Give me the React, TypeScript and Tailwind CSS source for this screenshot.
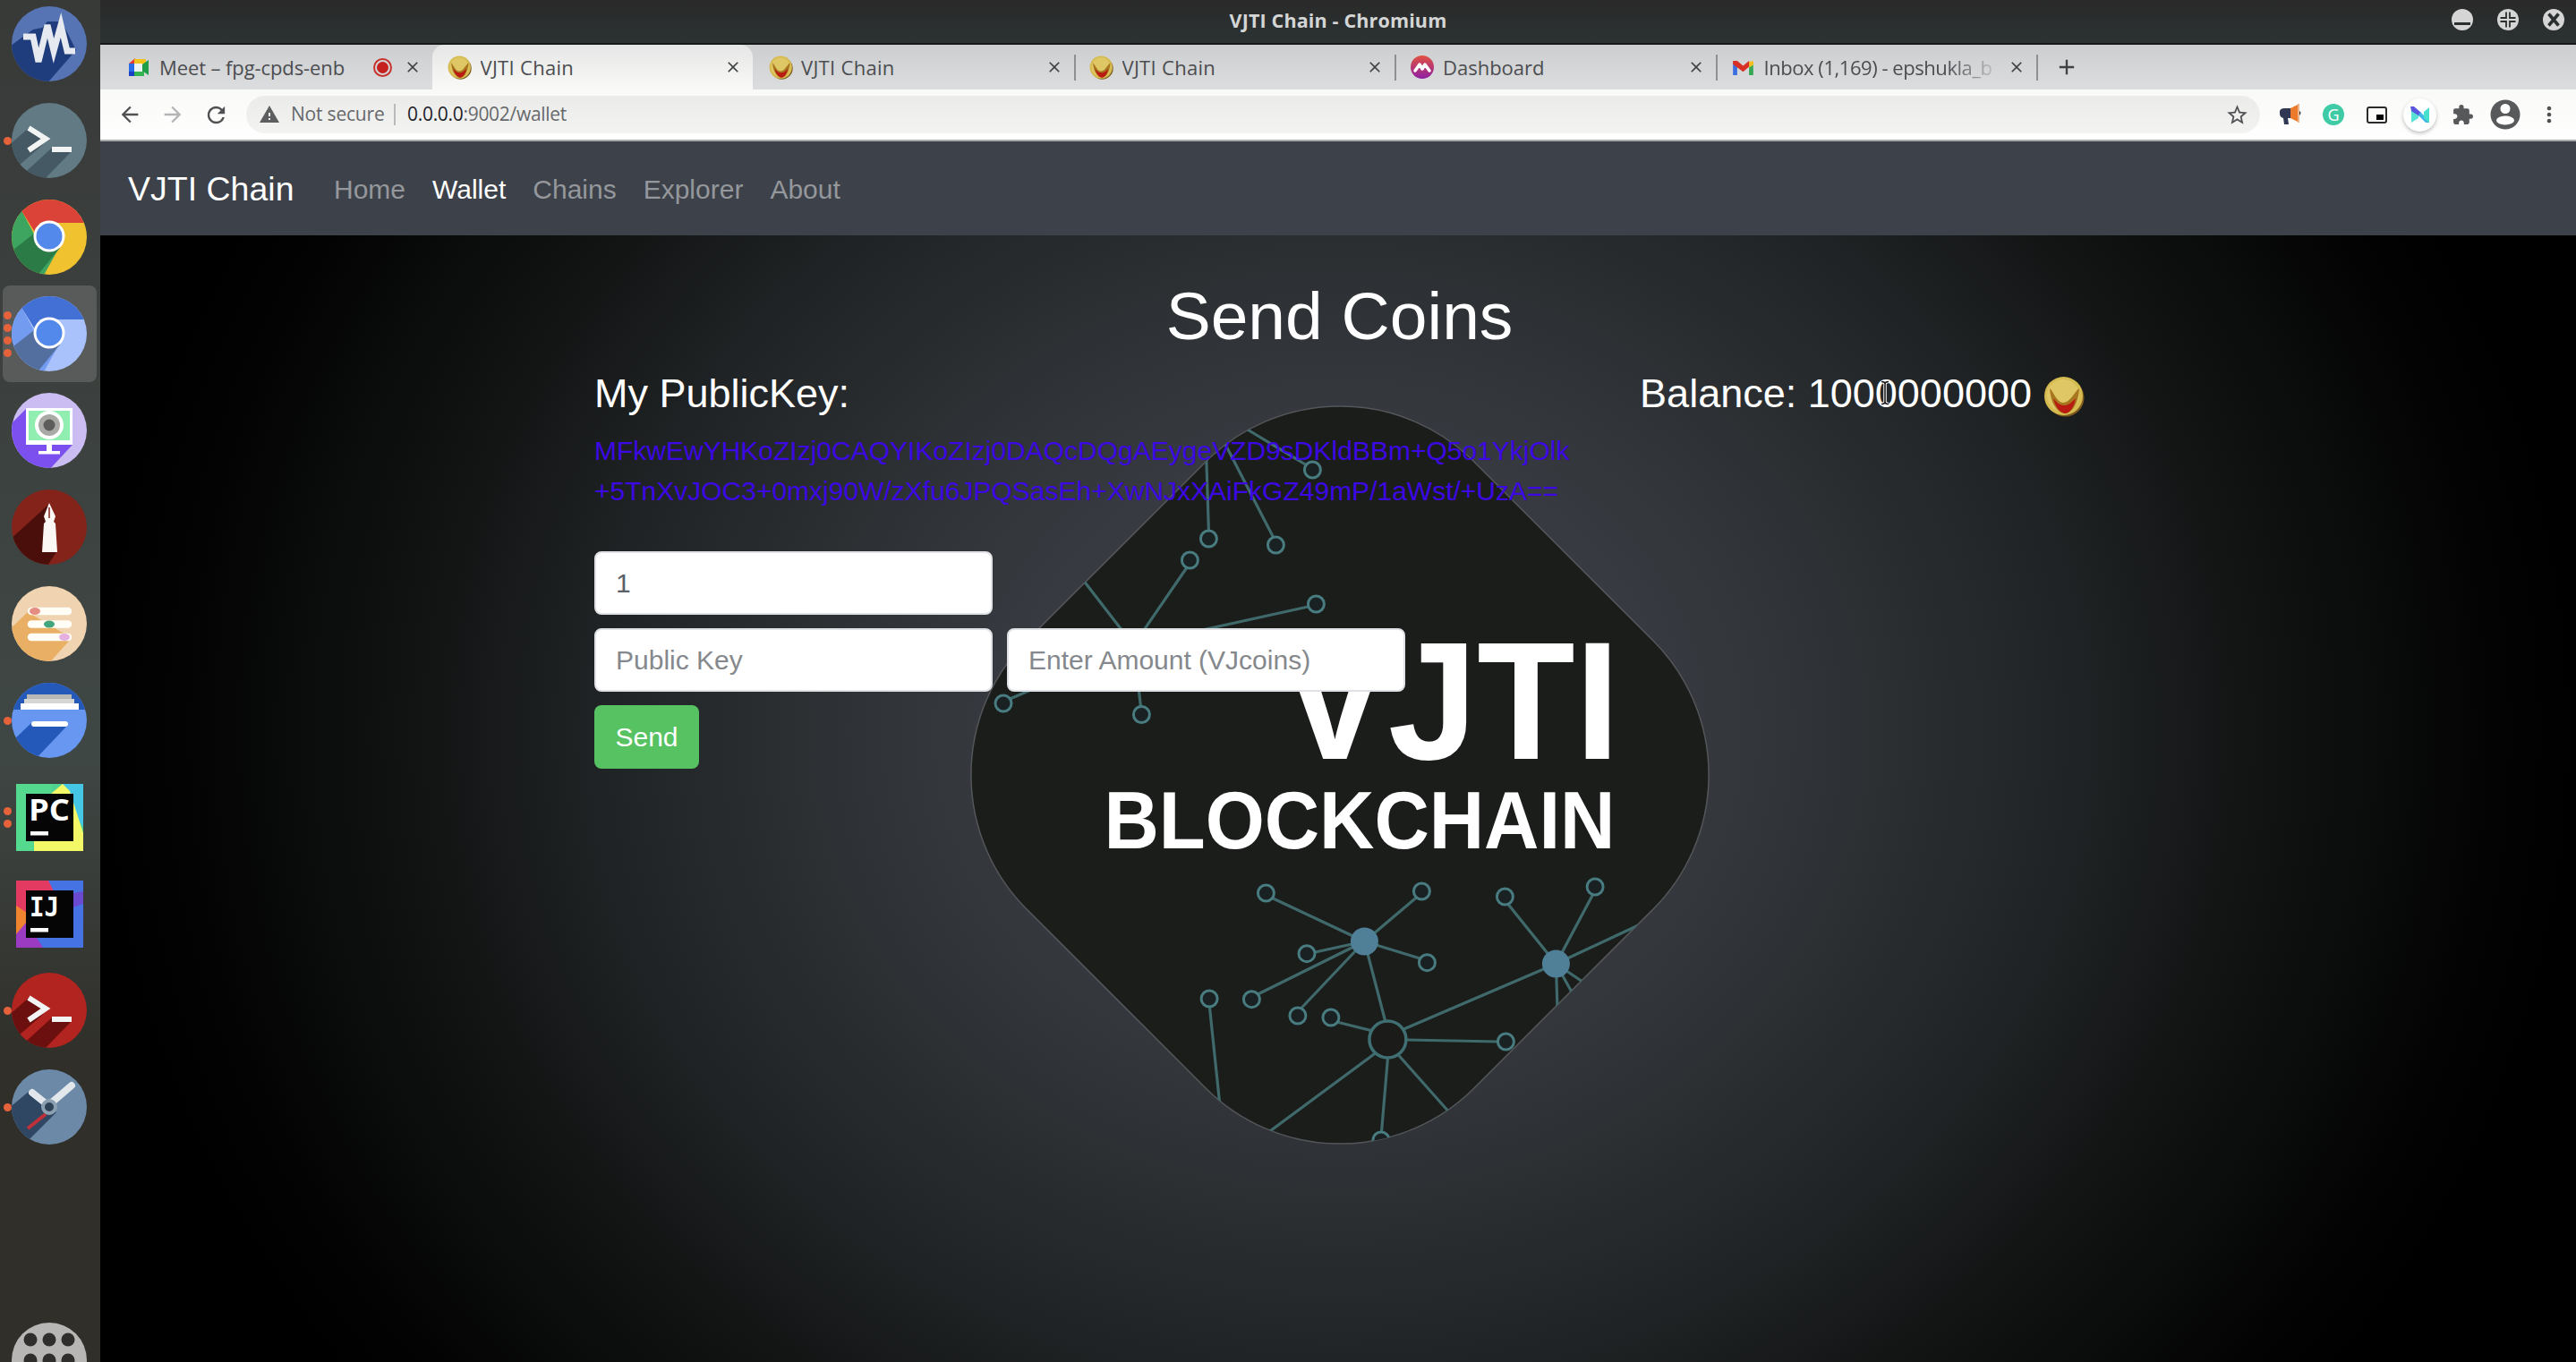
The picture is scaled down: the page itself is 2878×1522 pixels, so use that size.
import React from "react";
import { MdArrowBack, MdArrowForward, MdRefresh, MdWarning, MdStarBorder, MdExtension, MdMoreVert, MdClose, MdAdd } from "react-icons/md";

/* ---------- Launcher ---------- */

function Round({ id, bg, children }: { id: string; bg: string; children: React.ReactNode }) {
  return (
    <svg viewBox="0 0 84 84" className="h-[84px] w-[84px]">
      <clipPath id={id}>
        <circle cx="42" cy="42" r="42" />
      </clipPath>
      <g clipPath={`url(#${id})`}>
        <rect width="84" height="84" fill={bg} />
        {children}
      </g>
    </svg>
  );
}

const VmIcon = () => (
  <Round id="vm" bg="#5673b3">
    <path d="M-4 46 L24 26 L34 24 L40 17 L56 17 L72 49 L38 88 L-4 88Z" fill="#1f3c7c" />
    <path d="M13 34H24L30 62L40 21L47 50L55 21L62 50H71" fill="none" stroke="#e6eaf0" strokeWidth="7" />
  </Round>
);

const TerminalIcon = ({ id, bg, shade, stripe }: { id: string; bg: string; shade: string; stripe: string }) => (
  <Round id={id} bg={bg}>
    <path d="M19 28L-6 50V88H4L38 42Z" fill={shade} />
    <path d="M45 50L8 84L34 88L67 54Z" fill={shade} />
    <path d="M45 50L12 80L8 70L38 44Z" fill={stripe} />
    <path d="M19 28L38 40L19 53" fill="none" stroke="#f2f3f3" strokeWidth="6" />
    <path d="M45 52H67" stroke="#f2f3f3" strokeWidth="6" />
  </Round>
);

const ChromeIcon = ({ id, top, left, leftShade, right }: { id: string; top: string; left: string; leftShade: string; right: string }) => (
  <Round id={id} bg={right}>
    <path d="M0 0L12 14L27 42L54 52L34 88H0Z" fill={left} />
    <path d="M25 38L2 56L10 88H26L54 54Z" fill={leftShade} />
    <path d="M12 14L28 40L42 26H84V0H0Z" fill={top} />
    <circle cx="42" cy="41" r="17.500" fill="#fff" />
    <circle cx="42" cy="41" r="14.500" fill="#5489ec" />
  </Round>
);

const RecorderIcon = () => (
  <Round id="rec" bg="#cbbcf1">
    <path d="M16 18L-4 38V88H40L68 58Z" fill="#7c50ef" />
    <rect x="16" y="17" width="52" height="41" fill="#fff" />
    <rect x="19" y="20" width="46" height="33" fill="#90efb0" />
    <circle cx="42" cy="36" r="16" fill="#fff" />
    <circle cx="42" cy="36" r="12" fill="#a9a9a6" />
    <circle cx="42" cy="36" r="6.500" fill="#5d5e5c" />
    <path d="M39 58H45V65H54V68.500H30V65H39Z" fill="#fff" />
  </Round>
);

const PenIcon = () => (
  <Round id="pen" bg="#84231a">
    <path d="M40 18L-4 58L20 88H38L50 70Z" fill="#4b0f0b" />
    <path d="M42 15L49 30L47 36L49 38L51 70H34L36 38L38 36L36 30Z" fill="#fbf7f4" />
    <path d="M42 20V32" stroke="#84231a" strokeWidth="1.500" />
  </Round>
);

const TweaksIcon = () => (
  <Round id="twk" bg="#f0d3b0">
    <path d="M18 29L-4 50V88H40L67 58Z" fill="#e9b065" />
    <g stroke="#fffdf6" strokeWidth="8.500" strokeLinecap="round">
      <path d="M22 28H63M22 42.500H63M22 57H63" />
    </g>
    <ellipse cx="26" cy="28" rx="6" ry="4" fill="#e58d83" />
    <ellipse cx="42" cy="42.500" rx="6" ry="4" fill="#43a57e" />
    <ellipse cx="59" cy="57" rx="6" ry="4" fill="#e5b0e0" />
  </Round>
);

const FilesIcon = () => (
  <Round id="fil" bg="#6797f0">
    <rect width="84" height="30" fill="#2559b9" />
    <path d="M23 44L0 66V88H24L63 47Z" fill="#2559b9" />
    <rect x="17" y="13" width="50" height="6" fill="#b8b8b6" />
    <rect x="14" y="18" width="56" height="6" fill="#d6d6d4" />
    <rect x="10" y="23" width="65" height="7" fill="#fff" />
    <path d="M25 46H60" stroke="#fff" strokeWidth="6" strokeLinecap="round" />
  </Round>
);

const PyCharmIcon = () => (
  <svg viewBox="0 0 75 75" className="h-[75px] w-[75px]">
    <rect width="75" height="75" fill="#4fd393" />
    <path d="M44 10L52 0H75V48Z" fill="#45c6e4" />
    <path d="M40 10L52 0L60 8L75 55V75H20V62Z" fill="#f3f866" />
    <path d="M0 0H40V20H12V62H20L18 75H0Z" fill="#55d98f" />
    <rect x="11" y="11" width="53" height="53" fill="#050505" />
    <text x="14" y="41" fontSize="34" fontWeight="700" fontFamily="Open Sans, sans-serif" fill="#fff" textLength="46" lengthAdjust="spacingAndGlyphs">PC</text>
    <rect x="16" y="53" width="20" height="4.500" fill="#fff" />
  </svg>
);

const IntelliJIcon = () => (
  <svg viewBox="0 0 75 75" className="h-[75px] w-[75px]">
    <rect width="75" height="75" fill="#4673e4" />
    <path d="M0 0H36L44 16L12 50L0 30Z" fill="#e33a62" />
    <path d="M0 28L12 36V52L0 68Z" fill="#ee8330" />
    <path d="M0 60L12 46L30 75H0Z" fill="#9a3bc2" />
    <path d="M64 14L75 12V26L64 30Z" fill="#6a4bd0" />
    <rect x="11" y="11" width="53" height="53" fill="#050505" />
    <text x="15" y="40" fontSize="31" fontWeight="700" fontFamily="DejaVu Sans Mono, monospace" fill="#fff" textLength="33" lengthAdjust="spacingAndGlyphs">IJ</text>
    <rect x="16" y="53" width="20" height="4.500" fill="#fff" />
  </svg>
);

const ClockIcon = () => (
  <Round id="clk" bg="#6c8aa8">
    <path d="M20 24L-4 44V80L20 78L50 48Z" fill="#2f4763" />
    <path d="M38 50L18 66" stroke="#c03038" strokeWidth="4" />
    <path d="M23 26L38 38M67 18L46 36" stroke="#e2e7ec" strokeWidth="8" strokeLinecap="round" />
    <circle cx="42" cy="42" r="7" fill="#2f4358" stroke="#8ca0b2" strokeWidth="4" />
  </Round>
);

const GridIcon = () => (
  <Round id="grd" bg="#b7b6b5">
    {[21, 42, 63].map((x) =>
      [19, 42, 64].map((y) => <circle key={`${x}-${y}`} cx={x} cy={y} r="7.500" fill="#2f2e2c" />)
    )}
  </Round>
);

const launcher: { icon: React.ReactNode; dots: number; active?: boolean }[] = [
  { icon: <VmIcon />, dots: 0 },
  { icon: <TerminalIcon id="term" bg="#617a83" shade="#445963" stripe="#617a83" />, dots: 1 },
  { icon: <ChromeIcon id="chr" top="#dc4338" left="#3ea561" leftShade="#2b7b46" right="#f0c230" />, dots: 0 },
  { icon: <ChromeIcon id="chm" top="#4370d4" left="#739bf0" leftShade="#526f9f" right="#a9c2fb" />, dots: 4, active: true },
  { icon: <RecorderIcon />, dots: 0 },
  { icon: <PenIcon />, dots: 0 },
  { icon: <TweaksIcon />, dots: 0 },
  { icon: <FilesIcon />, dots: 1 },
  { icon: <PyCharmIcon />, dots: 2 },
  { icon: <IntelliJIcon />, dots: 0 },
  { icon: <TerminalIcon id="rterm" bg="#b12420" shade="#6c100f" stripe="#b12420" />, dots: 1 },
  { icon: <ClockIcon />, dots: 1 },
];

function Launcher() {
  return (
    <aside className="flex h-full w-[112px] shrink-0 flex-col overflow-hidden bg-linear-to-b from-[#383a38] via-[#3f4744] via-55% to-[#302f2a] to-78%">
      <div className="-mt-[5px] flex shrink-0 flex-col">
        {launcher.map((l, i) => (
          <div key={i} className={`ml-[3px] flex h-[108px] w-[105px] items-center ${l.active ? "rounded-lg bg-[#595b5a]" : ""}`}>
            <div className="flex w-[10px] flex-col items-center gap-[5px]">
              {Array.from({ length: l.dots }).map((_, k) => (
                <span key={k} className="h-[9px] w-[9px] rounded-full bg-[#e5623a]" />
              ))}
            </div>
            <div className="flex w-[84px] justify-center">{l.icon}</div>
          </div>
        ))}
      </div>
      <div className="mt-[187px] ml-[13px] shrink-0">
        <GridIcon />
      </div>
    </aside>
  );
}

/* ---------- Browser chrome ---------- */

function Coin({ className }: { className: string }) {
  return (
    <svg viewBox="0 0 46 46" className={className}>
      <circle cx="24.500" cy="24.500" r="21" fill="#7c5a1e" />
      <circle cx="22.500" cy="22.500" r="21.500" fill="#d6bb50" />
      <circle cx="22" cy="22" r="18" fill="#dfc766" />
      <path d="M7 14C11 17 15 30 22 30C30 30 35 17 40 14C39 30 33 41 24 42C15 41 8 30 7 14Z" fill="#a8761f" />
      <path d="M11 25C15 30 18 33 23 33C29 33 33 28 36 25C34 36 29 42 24 42C18 41 13 34 11 25Z" fill="#b91a12" />
    </svg>
  );
}

const MeetIcon = () => (
  <svg viewBox="0 0 24 24" className="h-6 w-6">
    <path d="M1 8L8 2V8Z" fill="#e53935" />
    <path d="M7 3H20V9H7Z" fill="#f3c21b" />
    <path d="M1 8H7V17H1Z" fill="#2a6be8" />
    <path d="M1 17H7V22H1Z" fill="#1a3fc4" />
    <path d="M7 16H18V22H7Z" fill="#35b552" />
    <path d="M16 9L23 4V21L16 16Z" fill="#1f9d47" />
    <rect x="7" y="8" width="9" height="9" fill="#eef1f2" />
  </svg>
);

const DashIcon = () => (
  <svg viewBox="0 0 26 26" className="h-[26px] w-[26px]">
    <defs>
      <linearGradient id="dash" x1="0" y1="0" x2="0" y2="1">
        <stop offset="0" stopColor="#e2513f" />
        <stop offset="1" stopColor="#8e1fa4" />
      </linearGradient>
    </defs>
    <circle cx="13" cy="13" r="13" fill="url(#dash)" />
    <path d="M5 17L10 10L13 15L16 10L21 17" fill="none" stroke="#fff" strokeWidth="3.500" strokeLinejoin="round" strokeLinecap="round" />
  </svg>
);

const GmailIcon = () => (
  <svg viewBox="0 0 24 18" className="h-[17px] w-[23px]">
    <path d="M0 3V18H5V7Z" fill="#3b6fe0" />
    <path d="M24 3V18H19V7Z" fill="#35a853" />
    <path d="M19 2L24 1V6L19 9Z" fill="#f6bf1d" />
    <path d="M0 1L5 1L12 7L19 1V8L12 14L0 5Z" fill="#d93025" />
  </svg>
);

const tabs = [
  { icon: <MeetIcon />, label: "Meet – fpg-cpds-enb", rec: true },
  { icon: <Coin className="h-[27px] w-[27px]" />, label: "VJTI Chain", active: true },
  { icon: <Coin className="h-[27px] w-[27px]" />, label: "VJTI Chain", sep: true },
  { icon: <Coin className="h-[27px] w-[27px]" />, label: "VJTI Chain", sep: true },
  { icon: <DashIcon />, label: "Dashboard", sep: true },
  { icon: <GmailIcon />, label: "Inbox (1,169) - epshukla_b", sep: true, fade: true },
];

const tabTracking = ["tracking-[-0.1px]", "tracking-[0.3px]", "tracking-[0.3px]", "tracking-[0.3px]", "tracking-[0px]", "tracking-[-0.450px]"];

function TabStrip() {
  return (
    <div className="flex h-[50px] shrink-0 bg-linear-to-b from-[#cdced0] to-[#dcdddf] pl-[12px]">
      {tabs.map((t, i) => (
        <div
          key={i}
          className={`flex h-[50px] w-[358.500px] shrink-0 items-center pr-[12px] pl-[17px] ${t.active ? "rounded-t-[14px] bg-linear-to-b from-[#e6e6e6] to-[#f9f9f7]" : ""}`}
        >
          <div className="flex w-[28px] shrink-0 justify-center">{t.icon}</div>
          <div
            className={`ml-[9px] h-8 flex-1 overflow-hidden text-[22px] leading-8 whitespace-nowrap text-[#4b4d50] ${tabTracking[i]} ${t.fade ? "mask-r-from-75% mask-r-to-98%" : ""}`}
          >
            {t.label}
          </div>
          {t.rec && (
            <span className="mr-[13px] flex h-[21px] w-[21px] items-center justify-center rounded-full border-2 border-[#c8322c]">
              <span className="h-[13px] w-[13px] rounded-full bg-[#c5221f]" />
            </span>
          )}
          <MdClose className="h-[20px] w-[20px] shrink-0 text-[#3f4143]" />
          <span className={`-mr-[14px] ml-[12px] h-[29px] w-[2px] ${t.sep ? "bg-[#8e9092]" : ""}`} />
        </div>
      ))}
      <MdAdd className="mt-[11px] ml-[20px] h-[28px] w-[28px] text-[#3f4143]" />
    </div>
  );
}

function Toolbar() {
  return (
    <div className="flex h-[58px] shrink-0 items-center border-b-2 border-[#a9aaac] bg-linear-to-b from-[#f9f9f7] to-white pl-[19px]">
      <MdArrowBack className="h-7 w-7 text-[#4f5153]" />
      <MdArrowForward className="ml-5 h-7 w-7 text-[#b4b5b6]" />
      <MdRefresh className="ml-5 h-[29px] w-[29px] text-[#4f5153]" />
      <div className="ml-[19px] flex h-[42px] w-[2250px] items-center rounded-full bg-linear-to-b from-[#ebecea] to-[#f3f3f2] pr-[12px] pl-[14px] text-[21px]">
        <MdWarning className="h-6 w-6 text-[#5c5e60]" />
        <span className="ml-[12px] w-[103px] tracking-[-0.2px] whitespace-nowrap text-[#66686b]">Not secure</span>
        <span className="ml-[12px] h-6 w-[2px] bg-[#b9babb]" />
        <span className="ml-[13px] tracking-[-0.3px] whitespace-nowrap text-[#66686b]">
          <span className="text-[#1c1d28]">0.0.0.0</span>:9002/wallet
        </span>
        <MdStarBorder className="ml-auto h-[27px] w-[27px] text-[#4f5153]" />
      </div>
      <div className="ml-[21px] flex items-center">
        <svg viewBox="0 0 26 26" className="h-[26px] w-[26px]">
          <path d="M1 9Q2 6 6 6H14V17H10L11 24H6L5 17Q1 16 1 12Z" fill="#303752" />
          <path d="M13 6L21 2V21L13 17Z" fill="#ec7a2a" />
          <path d="M21 1H23V22H21Z" fill="#e9b58c" />
          <path d="M23 9Q26 11 23 14Z" fill="#333" />
        </svg>
        <span className="ml-[23px] flex h-6 w-6 items-center justify-center rounded-full bg-[#3fcba6] text-[18px] leading-none font-medium text-white">G</span>
        <span className="ml-[25px] flex h-[19px] w-[23px] items-end justify-end rounded-[3px] border-[2.500px] border-[#2b2b2b] pr-[2px] pb-[2px]">
          <span className="h-[6px] w-[8px] bg-black" />
        </span>
        <span className="ml-[18px] flex h-[37px] w-[37px] items-center justify-center rounded-full bg-white shadow-[0_2px_4px_rgba(0,0,0,0.25)]">
          <svg viewBox="0 0 24 20" className="h-[20px] w-6">
            <path d="M2 1V19L10 14V8Z" fill="#57e2d4" />
            <path d="M1 1L5 1L13 8V13L2 6Z" fill="#5a55e0" />
            <path d="M12 7L22 17V19H18L10 11Z" fill="#3fb6e4" />
            <path d="M16 7L22 2V19L16 14Z" fill="#45dfcb" />
          </svg>
        </span>
        <MdExtension className="ml-[17px] h-[25px] w-[25px] text-[#56585a]" />
        <svg viewBox="0 0 34 34" className="ml-[18px] h-[34px] w-[34px]">
          <circle cx="17" cy="17" r="16.500" fill="#58595b" />
          <circle cx="17" cy="10.500" r="5.500" fill="#fff" />
          <ellipse cx="17" cy="23.500" rx="10" ry="5" fill="#fff" />
        </svg>
        <MdMoreVert className="ml-[18px] h-7 w-7 text-[#4f5153]" />
      </div>
    </div>
  );
}

function TitleBar() {
  return (
    <div className="grid h-[50px] shrink-0 grid-cols-[1fr_auto_1fr] items-center border-b-2 border-[#151918] bg-linear-to-b from-[#2a2a2a] to-[#2b3232]">
      <span />
      <span className="pb-[2px] text-[21.500px] font-bold tracking-[0.150px] text-[#d4d6d6]">VJTI Chain - Chromium</span>
      <div className="flex items-center justify-end gap-[27px] pr-[13px] pb-[5px]">
        <svg viewBox="0 0 24 24" className="h-6 w-6">
          <circle cx="12" cy="12" r="12" fill="#d5d5d5" />
          <path d="M3 16.500H21" stroke="#2a2f2f" strokeWidth="3" />
        </svg>
        <svg viewBox="0 0 24 24" className="h-6 w-6">
          <circle cx="12" cy="12" r="12" fill="#d5d5d5" />
          <path d="M3.500 10H10V3.500M14 3.500V10H20.500M20.500 14H14V20.500M10 20.500V14H3.500" fill="none" stroke="#2a2f2f" strokeWidth="1.800" />
        </svg>
        <svg viewBox="0 0 24 24" className="h-6 w-6">
          <circle cx="12" cy="12" r="12" fill="#d5d5d5" />
          <path d="M6.500 5.500L17.500 18.500M17.500 5.500L6.500 18.500" stroke="#2a2f2f" strokeWidth="3.500" />
        </svg>
      </div>
    </div>
  );
}

/* ---------- Backdrop emblem: coordinates run over an 830 x 830 square ---------- */

const smallNodes = [
  [1466, 525], [1425, 609], [1350, 602], [1329, 626], [1470, 675], [1120.6, 786], [1275, 798.5],
  [1414, 998], [1588, 996], [1681, 1002], [1781.7, 991], [1459.6, 1065.7], [1594, 1075.7],
  [1398, 1116.7], [1449.5, 1135], [1486.5, 1137], [1350.7, 1116], [1682, 1164], [1542.6, 1274],
];

const links = [
  "M1380 472L1458 519", "M1358 476L1422 600", "M1347 500L1350 593", "M1325 635L1266 721L1205 642",
  "M1461 678L1266 721L1128 781M1266 721L1274 789", "M1422 1004L1524 1052L1582 1003", "M1469 1064L1524 1052L1405 1111",
  "M1454 1126L1524 1052L1586 1071", "M1524 1052L1547 1140", "M1493 1142L1533 1152", "M1685 1011L1738 1077L1779 1000",
  "M1738 1077L1830 1034M1738 1077L1775 1102M1738 1077L1762 1120M1738 1077L1740 1140", "M1738 1077L1568 1150",
  "M1571 1162L1673 1164", "M1536 1177L1405 1274", "M1550 1183L1543 1266", "M1562 1179L1625 1250", "M1351 1125L1363 1240",
];

function Emblem() {
  return (
    <svg viewBox="1081.600 451 830 830" className="h-[830px] w-[830px]">
      <clipPath id="diamond">
        <rect x="1143.100" y="512.500" width="707" height="707" rx="212" transform="rotate(45 1496.600 866)" />
      </clipPath>
      <rect x="1143.100" y="512.500" width="707" height="707" rx="212" transform="rotate(45 1496.600 866)" fill="#1b1d1b" stroke="#55565a" strokeWidth="1.500" />
      <g clipPath="url(#diamond)">
        <path d={links.join("")} fill="none" stroke="#3f696b" strokeWidth="3.200" />
        {smallNodes.map(([x, y], i) => (
          <circle key={i} cx={x} cy={y} r="9" fill="#1a2122" stroke="#487c80" strokeWidth="3" />
        ))}
        <circle cx="1524" cy="1052" r="15.500" fill="#4f8097" />
        <circle cx="1738" cy="1077" r="15.500" fill="#4f8097" />
        <circle cx="1550" cy="1161.500" r="20.500" fill="#1b1c1a" stroke="#3f6f72" strokeWidth="3.500" />
      </g>
      <g fill="#fff" fontFamily="Liberation Sans, Arial, sans-serif" fontWeight="700">
        <text x="1431" y="847.500" fontSize="188" textLength="378" lengthAdjust="spacingAndGlyphs">VJTI</text>
        <text x="1233" y="947.800" fontSize="90" textLength="571" lengthAdjust="spacingAndGlyphs">BLOCKCHAIN</text>
      </g>
    </svg>
  );
}

/* ---------- Web page ---------- */

function Navbar() {
  return (
    <nav className="flex h-[105px] shrink-0 items-center bg-[#3d4149] pt-[2px] pl-[31px] text-[30px] text-[#94979b]">
      <span className="w-[230px] text-[37.500px] whitespace-nowrap text-white">VJTI Chain</span>
      <div className="flex items-center gap-[30px]">
        <span>Home</span>
        <span className="text-white">Wallet</span>
        <span>Chains</span>
        <span>Explorer</span>
        <span>About</span>
      </div>
    </nav>
  );
}

const field = "h-[71px] w-[445px] rounded-[8px] border-2 border-[#dfe1e4] bg-white pl-[22px] text-[30px] outline-none placeholder:text-[#85888c]";

function Wallet() {
  return (
    <main className="relative flex-1 overflow-hidden bg-[radial-gradient(1400px_1220px_at_50%_44%,#3c3f46_0%,#373a40_26%,#2b2e31_45%,#212426_58%,#121414_73%,#030303_92%,#000_100%)] text-white">
      <div className="absolute top-[188px] left-[969.600px]">
        <Emblem />
      </div>
      <div className="relative ml-[552px] w-[1665px] pt-[46px]">
        <h1 className="text-center text-[75px] leading-[88px]">Send Coins</h1>
        <div className="mt-4 flex items-center justify-between text-[45px] leading-[53px]">
          <h4>My PublicKey:</h4>
          <h4 className="flex items-center">
            <span className="relative">
              Balance: 1000000000
              <svg viewBox="0 0 10 28" className="absolute top-[12px] left-[269px] h-[28px] w-[10px]">
                <path d="M1 1.500Q5 1.500 5 4Q5 1.500 9 1.500M5 3V25M1 26.500Q5 26.500 5 24Q5 26.500 9 26.500" fill="none" stroke="#fff" strokeWidth="3.500" />
                <path d="M1 1.500Q5 1.500 5 4Q5 1.500 9 1.500M5 3V25M1 26.500Q5 26.500 5 24Q5 26.500 9 26.500" fill="none" stroke="#111" strokeWidth="1.500" />
              </svg>
            </span>
            <Coin className="mt-[6px] ml-[13px] h-[46px] w-[46px]" />
          </h4>
        </div>
        <p className="mt-[15px] text-[30px] leading-[45px] whitespace-nowrap text-[#3c08e4]">
          MFkwEwYHKoZIzj0CAQYIKoZIzj0DAQcDQgAEygeVZD9sDKldBBm+Q5o1YkjOlk
          <br />
          +5TnXvJOC3+0mxj90W/zXfu6JPQSasEh+XwNJxXAiFkGZ49mP/1aWst/+UzA==
        </p>
        <form className="mt-[45px] flex flex-col items-start gap-[15px]">
          <input className={`${field} text-[#5b6066]`} defaultValue="1" />
          <div className="flex gap-[16px]">
            <input className={field} placeholder="Public Key" />
            <input className={field} placeholder="Enter Amount (VJcoins)" />
          </div>
          <button type="button" className="h-[71px] w-[117px] rounded-[8px] bg-[#57c262] text-[30px]">
            Send
          </button>
        </form>
      </div>
    </main>
  );
}

export default function App() {
  return (
    <div className="flex h-[1522px] w-[2878px] overflow-hidden bg-black font-['Open_Sans','Noto_Sans',sans-serif]">
      <Launcher />
      <div className="flex min-w-0 flex-1 flex-col">
        <TitleBar />
        <TabStrip />
        <Toolbar />
        <div className="flex flex-1 flex-col font-['Liberation_Sans',Arial,sans-serif]">
          <Navbar />
          <Wallet />
        </div>
      </div>
    </div>
  );
}
